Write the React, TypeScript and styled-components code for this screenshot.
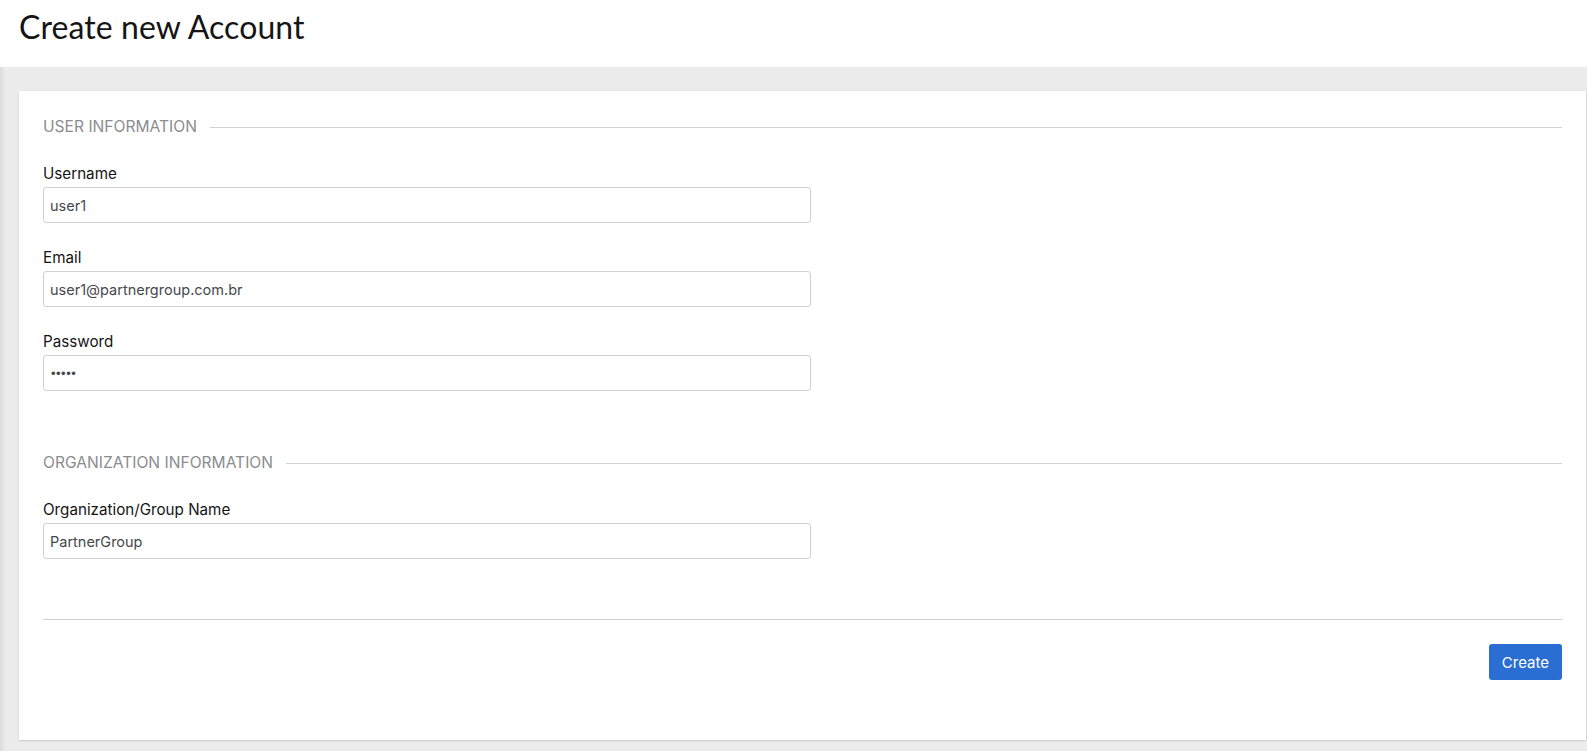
import React from "react";
import styled, { createGlobalStyle } from "styled-components";

const GlobalStyle = createGlobalStyle`
  html, body { margin: 0; padding: 0; background: #ececec; }
  body { font-family: Inter, "Noto Sans", sans-serif; color: #151515; }
  * { box-sizing: border-box; }
`;

const Page = styled.div`
  min-height: 751px;
  display: flex;
  flex-direction: column;
  background: #ececec;
  box-shadow: inset 6px 0 6px -5px rgba(0, 0, 0, 0.12);
`;

const Header = styled.header`
  height: 67px;
  background: #fff;
  display: flex;
  align-items: center;
  padding: 0 19px 12px;
`;

const Title = styled.h1`
  margin: 0;
  font-family: Lato, "Open Sans", sans-serif;
  font-weight: 400;
  font-size: 32px;
  line-height: 1.2;
  color: #151515;
  letter-spacing: 0.1px;
`;

const Main = styled.main`
  padding: 24px 1px 11px 19px;
`;

const Card = styled.section`
  background: #fff;
  padding: 24px 24px 60px 24px;
  box-shadow: 0 1px 2px rgba(0, 0, 0, 0.14), 1px 0 2px rgba(0, 0, 0, 0.06);
  display: flex;
  flex-direction: column;
`;

const Section = styled.div<{ $gapTop?: number }>`
  display: flex;
  flex-direction: column;
  margin-top: ${(p) => p.$gapTop ?? 0}px;
`;

const SectionTitle = styled.div`
  display: flex;
  align-items: center;
  gap: 13px;
  font-size: 15.6px;
  line-height: 24px;
  color: #8a8d90;
  text-transform: uppercase;
  margin-bottom: 24px;
  &::after {
    content: "";
    flex: 1;
    height: 1px;
    background: #d2d2d2;
  }
`;

const Field = styled.div`
  display: flex;
  flex-direction: column;
  width: 768px;
  & + & {
    margin-top: 24px;
  }
`;

const Label = styled.label`
  font-size: 15.2px;
  line-height: 22px;
  margin-bottom: 2px;
  color: #151515;
`;

const Input = styled.input`
  height: 36px;
  border: 1px solid #d2d2d2;
  border-radius: 3px;
  padding: 0 6px;
  font-family: Inter, "Noto Sans", sans-serif;
  font-size: 14.5px;
  color: #46494c;
  background: #fff;
  outline: none;
  &[type="password"] {
    font-family: "Liberation Sans", sans-serif;
    font-size: 13px;
    letter-spacing: 0.5px;
    padding-left: 7px;
  }
`;

const Divider = styled.hr`
  border: none;
  height: 1px;
  background: #d2d2d2;
  margin: 60px 0 24px;
`;

const Actions = styled.div`
  display: flex;
  justify-content: flex-end;
`;

const Button = styled.button`
  height: 36px;
  padding: 0 13px;
  border: none;
  border-radius: 3px;
  background: #2a6ed4;
  color: #fff;
  font-family: Inter, "Noto Sans", sans-serif;
  font-size: 15px;
  cursor: pointer;
`;

export default function App() {
  return (
    <>
      <GlobalStyle />
      <Page>
        <Header>
          <Title>Create new Account</Title>
        </Header>
        <Main>
          <Card>
            <Section>
              <SectionTitle>User Information</SectionTitle>
              <Field>
                <Label>Username</Label>
                <Input defaultValue="user1" />
              </Field>
              <Field>
                <Label>Email</Label>
                <Input defaultValue="user1@partnergroup.com.br" />
              </Field>
              <Field>
                <Label>Password</Label>
                <Input type="password" defaultValue="12345" />
              </Field>
            </Section>
            <Section $gapTop={60}>
              <SectionTitle>Organization Information</SectionTitle>
              <Field>
                <Label>Organization/Group Name</Label>
                <Input defaultValue="PartnerGroup" />
              </Field>
            </Section>
            <Divider />
            <Actions>
              <Button>Create</Button>
            </Actions>
          </Card>
        </Main>
      </Page>
    </>
  );
}
